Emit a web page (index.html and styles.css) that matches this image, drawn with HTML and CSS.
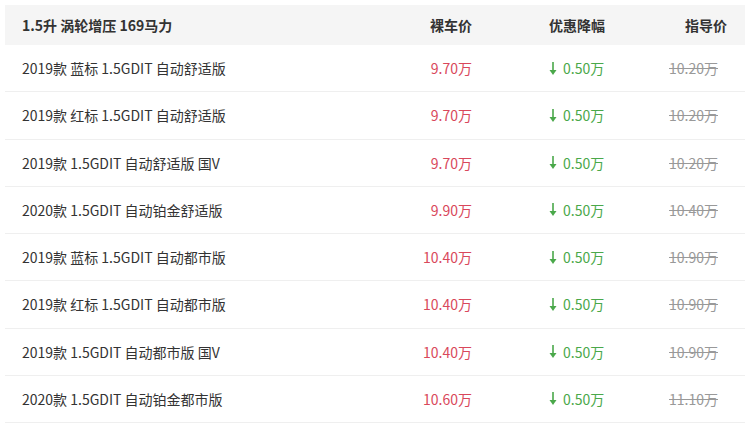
FILE: index.html
```html
<!DOCTYPE html>
<html lang="zh-CN">
<head>
    <meta charset="UTF-8">
    <title>车型报价</title>
    <link rel="stylesheet" href="styles.css">
</head>
<body>

    <div class="price-table">
        <div class="row head">
            <div class="name">1.5升 涡轮增压 169马力</div>
            <div class="price">裸车价</div>
            <div class="cut">优惠降幅</div>
            <div class="guide">指导价</div>
        </div>

        <div class="row">
            <div class="name">2019款 蓝标 1.5GDIT 自动舒适版</div>
            <div class="price">9.70万</div>
            <div class="cut"><svg class="down" viewBox="0 0 8 13"><path d="M4 0v9" /><polygon points="0.5,8 7.5,8 4,13" /></svg>0.50万</div>
            <div class="guide">10.20万</div>
        </div>
        <div class="row">
            <div class="name">2019款 红标 1.5GDIT 自动舒适版</div>
            <div class="price">9.70万</div>
            <div class="cut"><svg class="down" viewBox="0 0 8 13"><path d="M4 0v9" /><polygon points="0.5,8 7.5,8 4,13" /></svg>0.50万</div>
            <div class="guide">10.20万</div>
        </div>
        <div class="row">
            <div class="name">2019款 1.5GDIT 自动舒适版 国V</div>
            <div class="price">9.70万</div>
            <div class="cut"><svg class="down" viewBox="0 0 8 13"><path d="M4 0v9" /><polygon points="0.5,8 7.5,8 4,13" /></svg>0.50万</div>
            <div class="guide">10.20万</div>
        </div>
        <div class="row">
            <div class="name">2020款 1.5GDIT 自动铂金舒适版</div>
            <div class="price">9.90万</div>
            <div class="cut"><svg class="down" viewBox="0 0 8 13"><path d="M4 0v9" /><polygon points="0.5,8 7.5,8 4,13" /></svg>0.50万</div>
            <div class="guide">10.40万</div>
        </div>
        <div class="row">
            <div class="name">2019款 蓝标 1.5GDIT 自动都市版</div>
            <div class="price">10.40万</div>
            <div class="cut"><svg class="down" viewBox="0 0 8 13"><path d="M4 0v9" /><polygon points="0.5,8 7.5,8 4,13" /></svg>0.50万</div>
            <div class="guide">10.90万</div>
        </div>
        <div class="row">
            <div class="name">2019款 红标 1.5GDIT 自动都市版</div>
            <div class="price">10.40万</div>
            <div class="cut"><svg class="down" viewBox="0 0 8 13"><path d="M4 0v9" /><polygon points="0.5,8 7.5,8 4,13" /></svg>0.50万</div>
            <div class="guide">10.90万</div>
        </div>
        <div class="row">
            <div class="name">2019款 1.5GDIT 自动都市版 国V</div>
            <div class="price">10.40万</div>
            <div class="cut"><svg class="down" viewBox="0 0 8 13"><path d="M4 0v9" /><polygon points="0.5,8 7.5,8 4,13" /></svg>0.50万</div>
            <div class="guide">10.90万</div>
        </div>
        <div class="row">
            <div class="name">2020款 1.5GDIT 自动铂金都市版</div>
            <div class="price">10.60万</div>
            <div class="cut"><svg class="down" viewBox="0 0 8 13"><path d="M4 0v9" /><polygon points="0.5,8 7.5,8 4,13" /></svg>0.50万</div>
            <div class="guide">11.10万</div>
        </div>
    </div>

</body>
</html>
```

FILE: styles.css
```css
body {
    margin: 0;
    padding: 5px;
    background: #fff;
    font-family: "Noto Sans CJK SC", "Noto Sans", sans-serif;
    font-size: 14px;
    color: #333;
}
.price-table {
    width: 740px;
}
.row {
    display: grid;
    grid-template-columns: 370px 97px 77px 66px 1fr;
    align-items: center;
    height: 46.25px;
    border-bottom: 1px solid #efefef;
}
.row.head {
    height: 40px;
    border-bottom: none;
    background: #f5f5f5;
    font-weight: bold;
}
.name {
    padding-left: 17px;
}
.price {
    text-align: right;
    color: #d9485b;
}
.cut {
    grid-column: 4;
    display: flex;
    align-items: center;
    gap: 6px;
    color: #4aa84a;
    white-space: nowrap;
}
.guide {
    grid-column: 5;
    text-align: right;
    padding-right: 27px;
    color: #999;
    text-decoration: line-through;
}
.head .price,
.head .cut,
.head .guide {
    color: #333;
    text-decoration: none;
}
.head .guide {
    padding-right: 18px;
}
.down {
    width: 8px;
    height: 13px;
}
.down path {
    stroke: #4aa84a;
    stroke-width: 1.6;
}
.down polygon {
    fill: #4aa84a;
}
```
